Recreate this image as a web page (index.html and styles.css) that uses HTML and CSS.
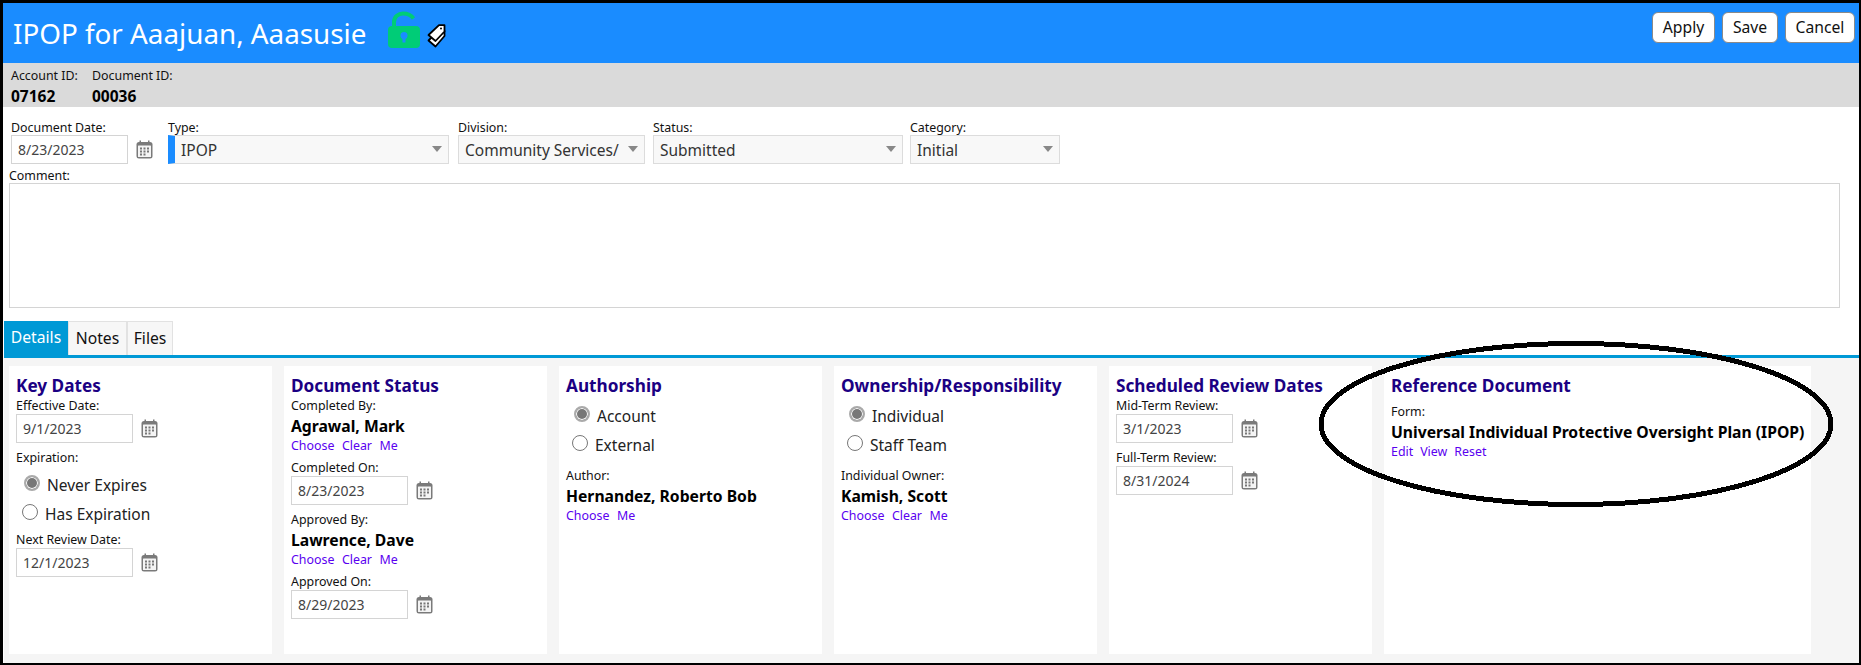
FILE: index.html
```html
<!DOCTYPE html>
<html lang="en">
<head>
    <meta charset="UTF-8">
    <meta name="viewport" content="width=device-width, initial-scale=1.0">
    <title>IPOP for Aaajuan, Aaasusie</title>
    <link rel="stylesheet" href="styles.css">
</head>
<body>
    <svg width="0" height="0" class="defs">
        <symbol id="cal" viewBox="0 0 17 19">
            <rect x="0.5" y="2" width="16" height="16.5" rx="2.5" fill="#7a7a7a"/>
            <rect x="3.5" y="0.5" width="1.5" height="3" fill="#7a7a7a"/>
            <rect x="12" y="0.5" width="1.5" height="3" fill="#7a7a7a"/>
            <rect x="2" y="5.5" width="13" height="11.5" rx="0.5" fill="#f4f4f4"/>
            <path d="M4 7.5h2v2H4zM7.5 7.5h2v2h-2zM11 7.5h2v2h-2zM4 10.5h2v2H4zM7.5 10.5h2v2h-2zM11 10.5h2v2h-2zM4 13.5h2v2H4zM7.5 13.5h2v2h-2z" fill="#777"/>
        </symbol>
    </svg>

    <div class="page">
        <!-- Title bar -->
        <div class="topbar">
            <div class="title-wrap">
                <div class="page-title">IPOP for Aaajuan, Aaasusie</div>
                <svg class="lock-icon" width="32" height="37" viewBox="0 0 32 37">
                    <path d="M6 16V11C6 5.5 10.500 2.500 15 2.500C19 2.500 23 4 25.500 7.500" fill="none" stroke="#00cc77" stroke-width="4"/>
                    <rect x="0" y="15" width="32" height="22" rx="4" fill="#00cc77"/>
                    <circle cx="16" cy="24.500" r="3.500" fill="#1a8cff"/>
                    <rect x="14.500" y="25" width="3" height="6.500" fill="#1a8cff"/>
                </svg>
                <svg class="tag-icon" width="19" height="24" viewBox="0 0 19 24">
                    <path d="M12 6L17.500 7V12L8.500 22.500L1.500 16.500Z" fill="#fff" stroke="#000" stroke-width="1.800" stroke-linejoin="round"/>
                    <path d="M12 1.200H17.500V7.500L8.500 17L1.500 11Z" fill="#fff" stroke="#000" stroke-width="1.800" stroke-linejoin="round"/>
                    <circle cx="14" cy="4.500" r="1" fill="#000"/>
                </svg>
            </div>
            <div class="top-buttons">
                <div class="top-btn btn-apply">Apply</div>
                <div class="top-btn btn-save">Save</div>
                <div class="top-btn btn-cancel">Cancel</div>
            </div>
        </div>

        <!-- Id bar -->
        <div class="idbar">
            <div class="id-account">
                <div class="id-label">Account ID:</div>
                <div class="id-value">07162</div>
            </div>
            <div>
                <div class="id-label">Document ID:</div>
                <div class="id-value">00036</div>
            </div>
        </div>

        <!-- Document fields -->
        <div class="doc-form">
            <div class="doc-row">
                <div class="doc-date">
                    <div class="doc-label">Document Date:</div>
                    <div class="date-line">
                        <div class="date-input">8/23/2023</div>
                        <svg class="cal-icon"><use href="#cal"/></svg>
                    </div>
                </div>
                <div class="w-type">
                    <div class="doc-label">Type:</div>
                    <div class="select select-type"><span>IPOP</span></div>
                </div>
                <div class="w-division">
                    <div class="doc-label">Division:</div>
                    <div class="select"><span>Community Services/</span></div>
                </div>
                <div class="w-status">
                    <div class="doc-label">Status:</div>
                    <div class="select"><span>Submitted</span></div>
                </div>
                <div class="w-category">
                    <div class="doc-label">Category:</div>
                    <div class="select"><span>Initial</span></div>
                </div>
            </div>
            <div class="comment-label">Comment:</div>
            <div class="comment-box"></div>
        </div>

        <!-- Tabs -->
        <div class="tabs">
            <div class="tab tab-active">Details</div>
            <div class="tab tab-notes">Notes</div>
            <div class="tab tab-files">Files</div>
        </div>

        <div class="cards">
            <div class="card">
                <div class="card-title">Key Dates</div>
                <div class="label">Effective Date:</div>
                <div class="date-line">
                    <div class="date-input">9/1/2023</div>
                    <svg class="cal-icon"><use href="#cal"/></svg>
                </div>
                <div class="label gap-7">Expiration:</div>
                <div class="radios">
                    <div class="radio-row checked"><span class="radio"></span>Never Expires</div>
                    <div class="radio-row"><span class="radio"></span>Has Expiration</div>
                </div>
                <div class="label gap-4">Next Review Date:</div>
                <div class="date-line">
                    <div class="date-input">12/1/2023</div>
                    <svg class="cal-icon"><use href="#cal"/></svg>
                </div>
            </div>

            <div class="card">
                <div class="card-title">Document Status</div>
                <div class="label">Completed By:</div>
                <div class="person">Agrawal, Mark</div>
                <div class="links"><a>Choose</a><a>Clear</a><a>Me</a></div>
                <div class="label gap-6">Completed On:</div>
                <div class="date-line">
                    <div class="date-input">8/23/2023</div>
                    <svg class="cal-icon"><use href="#cal"/></svg>
                </div>
                <div class="label gap-7">Approved By:</div>
                <div class="person">Lawrence, Dave</div>
                <div class="links"><a>Choose</a><a>Clear</a><a>Me</a></div>
                <div class="label gap-6">Approved On:</div>
                <div class="date-line">
                    <div class="date-input">8/29/2023</div>
                    <svg class="cal-icon"><use href="#cal"/></svg>
                </div>
            </div>

            <div class="card">
                <div class="card-title">Authorship</div>
                <div class="radios radios-top">
                    <div class="radio-row checked"><span class="radio"></span>Account</div>
                    <div class="radio-row"><span class="radio"></span>External</div>
                </div>
                <div class="label gap-9">Author:</div>
                <div class="person">Hernandez, Roberto Bob</div>
                <div class="links"><a>Choose</a><a>Me</a></div>
            </div>

            <div class="card">
                <div class="card-title">Ownership/Responsibility</div>
                <div class="radios radios-top">
                    <div class="radio-row checked"><span class="radio"></span>Individual</div>
                    <div class="radio-row"><span class="radio"></span>Staff Team</div>
                </div>
                <div class="label gap-9">Individual Owner:</div>
                <div class="person">Kamish, Scott</div>
                <div class="links"><a>Choose</a><a>Clear</a><a>Me</a></div>
            </div>

            <div class="card">
                <div class="card-title">Scheduled Review Dates</div>
                <div class="label">Mid-Term Review:</div>
                <div class="date-line">
                    <div class="date-input">3/1/2023</div>
                    <svg class="cal-icon"><use href="#cal"/></svg>
                </div>
                <div class="label gap-7">Full-Term Review:</div>
                <div class="date-line">
                    <div class="date-input">8/31/2024</div>
                    <svg class="cal-icon"><use href="#cal"/></svg>
                </div>
            </div>

            <div class="card card-wide">
                <div class="card-title">Reference Document</div>
                <div class="label gap-7">Form:</div>
                <div class="person">Universal Individual Protective Oversight Plan (IPOP)</div>
                <div class="links links-tight"><a>Edit</a><a>View</a><a>Reset</a></div>
            </div>
        </div>
    </div>

    <!-- Hand drawn callout around the reference document -->
    <svg class="callout" width="524" height="172" viewBox="0 0 524 172">
        <ellipse cx="262" cy="86" rx="255" ry="80.500" fill="none" stroke="#000" stroke-width="5" shape-rendering="crispEdges"/>
    </svg>
</body>
</html>
```

FILE: styles.css
```css
/* General Styles */
* {
    box-sizing: border-box;
}

body {
    position: relative;
    margin: 0;
    width: 1861px;
    height: 665px;
    padding: 3px 2px 2px 3px;
    background-color: #000;
    font-family: "Noto Sans", sans-serif;
    color: #111;
    overflow: hidden;
}

.defs {
    display: block;
    height: 0;
}

.page {
    height: 660px;
    background-color: #fff;
}

/* Title bar */
.topbar {
    display: flex;
    justify-content: space-between;
    height: 60px;
    background-color: #1a8cff;
}

.title-wrap {
    display: flex;
    align-items: flex-start;
}

.page-title {
    margin: 9px 0 0 10px;
    font-size: 27.8px;
    line-height: 42px;
    color: #fff;
}

.lock-icon {
    margin: 8px 0 0 22px;
}

.tag-icon {
    margin: 21px 0 0 7px;
}

.top-buttons {
    display: flex;
    gap: 7px;
    padding: 9px 4px 0 0;
}

.top-btn {
    height: 31px;
    border: 1px solid #8a8a8a;
    border-radius: 6px;
    background-color: #fff;
    font-size: 15.7px;
    line-height: 29px;
    text-align: center;
    color: #111;
}

.btn-apply {
    width: 63px;
}

.btn-save {
    width: 56px;
}

.btn-cancel {
    width: 70px;
}

/* Id bar */
.idbar {
    display: flex;
    height: 44px;
    padding: 3px 0 0 8px;
    background-color: #dadada;
}

.id-account {
    width: 81px;
}

.id-label {
    font-size: 12.4px;
    line-height: 20px;
}

.id-value {
    font-size: 15.5px;
    font-weight: bold;
    line-height: 20px;
    color: #000;
}

/* Document fields */
.doc-form {
    padding: 14px 0 0 8px;
}

.doc-row {
    display: flex;
}

.doc-label {
    font-size: 12.4px;
    line-height: 14px;
}

.doc-date {
    width: 157px;
}

.w-type {
    width: 281px;
    margin-right: 9px;
}

.w-division {
    width: 187px;
    margin-right: 8px;
}

.w-status {
    width: 250px;
    margin-right: 7px;
}

.w-category {
    width: 150px;
}

.select {
    display: flex;
    align-items: flex-start;
    height: 29px;
    padding-left: 6px;
    border: 1px solid #dcdcdc;
    background-color: #f8f8f8;
    font-size: 15.5px;
    line-height: 29px;
    color: #333;
}

.select span {
    flex: 1;
    white-space: nowrap;
}

.select::after {
    content: "";
    flex: none;
    margin: 10px 6px 0 0;
    border-left: 5px solid transparent;
    border-right: 5px solid transparent;
    border-top: 6px solid #888;
}

.select-type {
    border-left: 7px solid #1a8cff;
}

.comment-label {
    margin: 4px 0 0 -2px;
    font-size: 12.4px;
    line-height: 15px;
}

.comment-box {
    width: 1831px;
    height: 125px;
    margin-left: -2px;
    border: 1px solid #d4d4d4;
}

/* Tabs */
.tabs {
    display: flex;
    height: 37px;
    margin: 13px 0 0 1px;
    border-bottom: 3px solid #0099d6;
}

.tab {
    border: 1px solid #e2e2e2;
    border-bottom: none;
    background-color: #f7f7f7;
    font-size: 15.7px;
    line-height: 33px;
    text-align: center;
}

.tab-active {
    width: 64px;
    border: none;
    background-color: #0099d6;
    color: #fff;
}

.tab-notes {
    width: 59px;
}

.tab-files {
    width: 46px;
}

/* Cards */
.cards {
    display: flex;
    gap: 12px;
    height: 305px;
    margin-left: 1px;
    padding: 8px 0 9px 5px;
    background-color: #f5f5f5;
}

.card {
    width: 263px;
    padding: 9px 0 0 7px;
    background-color: #fff;
}

.card-wide {
    width: 427px;
}

.card-title {
    margin-bottom: 1px;
    font-size: 17.2px;
    font-weight: bold;
    line-height: 22px;
    color: #1b0083;
    white-space: nowrap;
}

.label {
    margin-top: 1px;
    font-size: 12.4px;
    line-height: 16px;
}

.gap-4 {
    margin-top: 4px;
}

.gap-6 {
    margin-top: 6px;
}

.gap-7 {
    margin-top: 7px;
}

.gap-9 {
    margin-top: 9px;
}

.date-line {
    display: flex;
    align-items: center;
    height: 29px;
}

.date-input {
    width: 117px;
    height: 29px;
    padding-left: 6px;
    border: 1px solid #d4d4d4;
    font-size: 14px;
    line-height: 27px;
    color: #444;
}

.cal-icon {
    width: 17px;
    height: 19px;
    margin-left: 8px;
}

.radios {
    margin-top: 4px;
}

.radios-top {
    margin-top: 4px;
}

.radio-row {
    display: flex;
    align-items: center;
    gap: 7px;
    height: 29px;
    padding-left: 6px;
    font-size: 15.5px;
    color: #222;
}

.radio-row.checked {
    padding-left: 8px;
}

.radio {
    width: 16px;
    height: 16px;
    margin-bottom: 3px;
    border: 1.5px solid #777;
    border-radius: 50%;
    background-color: #fff;
}

.checked .radio {
    border: 2px solid #aaa;
    box-shadow: inset 0 0 0 1px #fff;
    background-color: #777;
}

.person {
    font-size: 15.7px;
    font-weight: bold;
    line-height: 24px;
    color: #000;
    white-space: nowrap;
}

.links {
    display: flex;
    gap: 7.5px;
    font-size: 12.4px;
    line-height: 16px;
    color: #5a00f0;
}

.links-tight {
    gap: 7px;
}

/* Circled area */
.callout {
    position: absolute;
    top: 338px;
    left: 1314px;
}
```
